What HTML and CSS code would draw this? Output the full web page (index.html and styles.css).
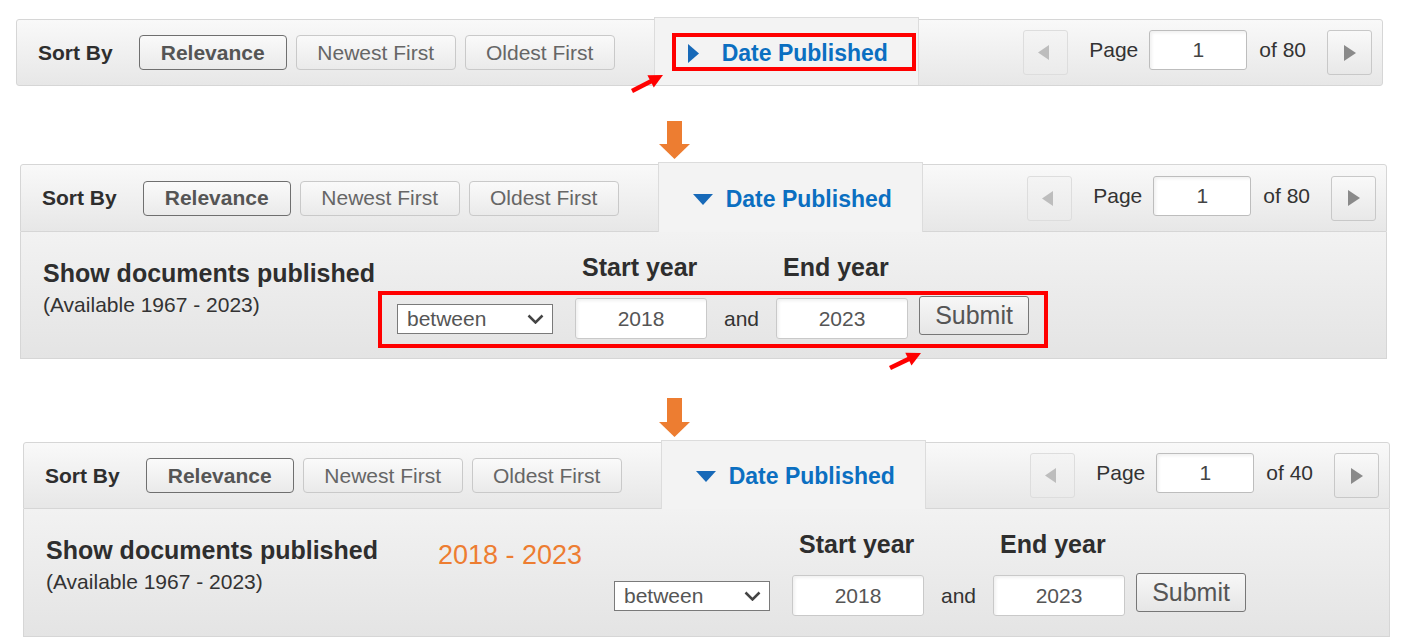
FILE: index.html
```html
<!DOCTYPE html>
<html lang="en">
<head>
<meta charset="utf-8">
<title>Date Published filter</title>
<link rel="stylesheet" href="styles.css">
</head>
<body>
<div class="page">

  <section class="panel p1">
    <div class="sortbar">
      <span class="sort-label">Sort By</span>
      <button class="sort-btn active w-rel">Relevance</button>
      <button class="sort-btn w-new">Newest First</button>
      <button class="sort-btn w-old">Oldest First</button>
      <div class="tab">
        <svg class="caret" width="22" height="19" viewBox="0 0 22 19"><polygon points="0,0 11,9.5 0,19"/></svg>
        <span class="tab-text">Date Published</span>
        <div class="hl hl-tab"></div>
      </div>
      <div class="pager">
        <button class="pg-btn prev disabled"><svg width="11" height="15" viewBox="0 0 11 15"><polygon points="11,0 0,7.5 11,15"/></svg></button>
        <span class="pg-text pg-page">Page</span>
        <input class="pg-input" value="1">
        <span class="pg-text pg-of">of 80</span>
        <button class="pg-btn next"><svg width="12" height="16" viewBox="0 0 12 16"><polygon points="0,0 12,8 0,16"/></svg></button>
      </div>
    </div>
  </section>

  <svg class="flow-arrow a1" width="31" height="38" viewBox="0 0 31 38"><rect x="8" y="0" width="15" height="24"/><polygon points="0,23 31,23 15.5,38"/></svg>

  <section class="panel p2">
    <div class="sortbar">
      <span class="sort-label">Sort By</span>
      <button class="sort-btn active w-rel">Relevance</button>
      <button class="sort-btn w-new">Newest First</button>
      <button class="sort-btn w-old">Oldest First</button>
      <div class="tab open">
        <svg class="caret" width="22" height="19" viewBox="0 0 22 19"><polygon points="1,4 21,4 11,15"/></svg>
        <span class="tab-text">Date Published</span>
      </div>
      <div class="pager">
        <button class="pg-btn prev disabled"><svg width="11" height="15" viewBox="0 0 11 15"><polygon points="11,0 0,7.5 11,15"/></svg></button>
        <span class="pg-text pg-page">Page</span>
        <input class="pg-input" value="1">
        <span class="pg-text pg-of">of 80</span>
        <button class="pg-btn next"><svg width="12" height="16" viewBox="0 0 12 16"><polygon points="0,0 12,8 0,16"/></svg></button>
      </div>
    </div>
    <div class="filter">
      <div class="docs">
        <div class="docs-title">Show documents published</div>
        <div class="docs-avail">(Available 1967 - 2023)</div>
      </div>
      <div class="range-form">
        <span></span>
        <span class="lbl">Start year</span>
        <span></span>
        <span class="lbl">End year</span>
        <span></span>
        <div class="select"><span>between</span><svg width="17" height="10" viewBox="0 0 17 10"><polyline points="1.5,1.5 8.5,8.5 15.5,1.5"/></svg></div>
        <input class="year" value="2018">
        <span class="and">and</span>
        <input class="year" value="2023">
        <button class="submit">Submit</button>
        <div class="hl hl-form"></div>
      </div>
    </div>
  </section>

  <svg class="flow-arrow a2" width="31" height="39" viewBox="0 0 31 39"><rect x="8" y="0" width="15" height="25"/><polygon points="0,24 31,24 15.5,39"/></svg>

  <section class="panel p3">
    <div class="sortbar">
      <span class="sort-label">Sort By</span>
      <button class="sort-btn active w-rel">Relevance</button>
      <button class="sort-btn w-new">Newest First</button>
      <button class="sort-btn w-old">Oldest First</button>
      <div class="tab open">
        <svg class="caret" width="22" height="19" viewBox="0 0 22 19"><polygon points="1,4 21,4 11,15"/></svg>
        <span class="tab-text">Date Published</span>
      </div>
      <div class="pager">
        <button class="pg-btn prev disabled"><svg width="11" height="15" viewBox="0 0 11 15"><polygon points="11,0 0,7.5 11,15"/></svg></button>
        <span class="pg-text pg-page">Page</span>
        <input class="pg-input" value="1">
        <span class="pg-text pg-of">of 40</span>
        <button class="pg-btn next"><svg width="12" height="16" viewBox="0 0 12 16"><polygon points="0,0 12,8 0,16"/></svg></button>
      </div>
    </div>
    <div class="filter">
      <div class="docs">
        <div class="docs-title">Show documents published</div>
        <div class="docs-avail">(Available 1967 - 2023)</div>
      </div>
      <div class="range-text">2018 - 2023</div>
      <div class="range-form">
        <span></span>
        <span class="lbl">Start year</span>
        <span></span>
        <span class="lbl">End year</span>
        <span></span>
        <div class="select"><span>between</span><svg width="17" height="10" viewBox="0 0 17 10"><polyline points="1.5,1.5 8.5,8.5 15.5,1.5"/></svg></div>
        <input class="year" value="2018">
        <span class="and">and</span>
        <input class="year" value="2023">
        <button class="submit">Submit</button>
      </div>
    </div>
  </section>

  <svg class="annot" width="1414" height="643" viewBox="0 0 1414 643">
    <line x1="632" y1="91" x2="651.5" y2="81" class="red-line"/>
    <polygon points="663,75 653.8,87.6 647.4,75.2" class="red-head"/>
    <line x1="890" y1="368" x2="909.5" y2="358.6" class="red-line"/>
    <polygon points="921,353 911.5,365.4 905.3,352.8" class="red-head"/>
  </svg>
</div>
</body>
</html>
```

FILE: styles.css
```css
html, body {
  margin: 0;
  padding: 0;
  background: #ffffff;
}

body {
  font-family: "Liberation Sans", Arial, sans-serif;
  color: #333333;
}

.page {
  position: relative;
  width: 1414px;
  height: 643px;
  box-sizing: border-box;
  padding-top: 19px;
  overflow: hidden;
}

.panel {
  width: 1367px;
}

.p1 { margin-left: 16px; }
.p2 { margin-left: 20px; margin-top: 5px; }
.p3 { margin-left: 23px; margin-top: 5px; }

/* ---------- sort bar ---------- */
.sortbar {
  display: flex;
  align-items: center;
  height: 67px;
  box-sizing: border-box;
  border: 1px solid #d6d6d6;
  border-radius: 3px;
  background: linear-gradient(#f9f9f9, #e7e7e7);
  padding-left: 21px;
}

.p2 .sortbar,
.p3 .sortbar {
  border-radius: 3px 3px 0 0;
}

.p2 .sortbar {
  height: 68px;
}

.sort-label {
  font-weight: bold;
  font-size: 21px;
  color: #2e2e2e;
  margin-right: 26px;
  white-space: nowrap;
}

.sort-btn {
  height: 35px;
  box-sizing: border-box;
  padding: 0;
  border: 1px solid #c9c9c9;
  border-radius: 4px;
  background: linear-gradient(#fafafa, #eaeaea);
  font-family: "Liberation Sans", Arial, sans-serif;
  font-size: 21px;
  color: #666666;
  margin-right: 9px;
  white-space: nowrap;
}

.sort-btn.active {
  border-color: #6f6f6f;
  font-weight: bold;
  color: #555555;
}

.w-rel { width: 148px; }
.w-new { width: 160px; }
.w-old { width: 150px; margin-right: 39px; }

/* ---------- tab ---------- */
.tab {
  position: relative;
  align-self: stretch;
  margin-top: -3px;
  margin-bottom: -1px;
  width: 265px;
  box-sizing: border-box;
  border: 1px solid #dcdcdc;
  border-bottom: none;
  background: #f3f3f3;
  display: flex;
  align-items: center;
  padding: 3px 0 0 33px;
}

.p1 .tab {
  margin-bottom: 0;
}

.caret {
  flex: none;
  margin-right: 12px;
  fill: #1769b8;
}

.tab-text {
  font-weight: bold;
  font-size: 23px;
  color: #0b6fc1;
  white-space: nowrap;
}

/* ---------- pager ---------- */
.pager {
  margin-left: auto;
  margin-right: 10px;
  display: flex;
  align-items: center;
}

.pg-btn {
  width: 45px;
  height: 45px;
  box-sizing: border-box;
  padding: 0;
  border: 1px solid #c8c8c8;
  border-radius: 3px;
  background: linear-gradient(#f9f9f9, #e8e8e8);
  display: flex;
  align-items: center;
  justify-content: center;
}

.pg-btn.next svg { fill: #8a8a8a; }
.pg-btn.prev svg { fill: #bdbdbd; margin-right: 4px; }

.pg-btn.disabled {
  border-color: #dddddd;
  background: linear-gradient(#f4f4f4, #ebebeb);
}

.pg-btn.prev { margin-right: 21px; }

.pg-text {
  font-size: 21px;
  color: #333333;
  margin-bottom: 5px;
  white-space: nowrap;
}

.pg-page { margin-right: 11px; }
.pg-of { margin-right: 21px; }

.pg-input {
  width: 98px;
  height: 40px;
  box-sizing: border-box;
  margin: 0 12px 5px 0;
  padding: 0;
  border: 1px solid #bdbdbd;
  border-radius: 3px;
  background: #ffffff;
  box-shadow: inset 2px 2px 3px rgba(0, 0, 0, 0.06);
  font-family: "Liberation Sans", Arial, sans-serif;
  font-size: 21px;
  color: #444444;
  text-align: center;
}

/* ---------- filter panel ---------- */
.filter {
  height: 127px;
  box-sizing: border-box;
  border: 1px solid #d6d6d6;
  border-top: none;
  background: linear-gradient(#f2f2f2, #e4e4e4);
  display: flex;
  align-items: flex-start;
  padding: 20px 0 0 22px;
}

.p3 .filter {
  height: 128px;
}

.docs {
  width: 335px;
  flex: none;
  margin-top: 6px;
}

.docs-title {
  font-weight: bold;
  font-size: 25px;
  line-height: 30px;
  color: #2e2e2e;
  white-space: nowrap;
}

.docs-avail {
  font-size: 21px;
  line-height: 26px;
  margin-top: 4px;
  color: #333333;
  white-space: nowrap;
}

.range-text {
  flex: none;
  width: 145px;
  margin: 10px 0 0 57px;
  font-size: 27px;
  line-height: 32px;
  color: #ed7d31;
  white-space: nowrap;
}

.range-form {
  position: relative;
  display: grid;
  grid-template-columns: repeat(5, auto);
  grid-template-rows: 30px 41px;
  row-gap: 16px;
  align-items: center;
  margin-left: 19px;
}

.p3 .range-form {
  margin-left: 31px;
}

.lbl {
  font-weight: bold;
  font-size: 25px;
  line-height: 30px;
  color: #2e2e2e;
  padding-left: 7px;
  white-space: nowrap;
}

.select {
  width: 156px;
  height: 30px;
  box-sizing: border-box;
  margin-right: 22px;
  padding: 0 8px 0 9px;
  border: 1px solid #7a7a7a;
  background: #ffffff;
  display: flex;
  align-items: center;
  justify-content: space-between;
  font-size: 21px;
  color: #555555;
}

.select svg {
  fill: none;
  stroke: #444444;
  stroke-width: 2.5;
}

.year {
  width: 132px;
  height: 41px;
  box-sizing: border-box;
  margin: 0;
  padding: 0;
  border: 1px solid #c9c9c9;
  border-radius: 3px;
  background: #ffffff;
  box-shadow: inset 2px 2px 3px rgba(0, 0, 0, 0.06);
  font-family: "Liberation Sans", Arial, sans-serif;
  font-size: 21px;
  color: #555555;
  text-align: center;
}

.and {
  margin: 0 17px;
  font-size: 21px;
  color: #333333;
}

.submit {
  align-self: start;
  width: 110px;
  height: 39px;
  box-sizing: border-box;
  margin: -2px 0 0 11px;
  padding: 0;
  border: 1px solid #777777;
  border-radius: 3px;
  background: linear-gradient(#f7f7f7, #e6e6e6);
  font-family: "Liberation Sans", Arial, sans-serif;
  font-size: 25px;
  color: #555555;
}

/* ---------- annotations ---------- */
.hl {
  position: absolute;
  box-sizing: border-box;
  border: 4px solid #ff0000;
}

.hl-tab {
  left: 17px;
  top: 15px;
  width: 244px;
  height: 38px;
}

.hl-form {
  left: -19px;
  top: 39px;
  width: 670px;
  height: 57px;
}

.flow-arrow {
  display: block;
  margin-left: 659px;
  fill: #ed7d31;
}

.a1 { margin-top: 35px; }
.a2 { margin-top: 39px; }

.annot {
  position: absolute;
  left: 0;
  top: 0;
  pointer-events: none;
}

.red-line {
  stroke: #ff0000;
  stroke-width: 4.5;
  stroke-linecap: butt;
}

.red-head {
  fill: #ff0000;
}
```
